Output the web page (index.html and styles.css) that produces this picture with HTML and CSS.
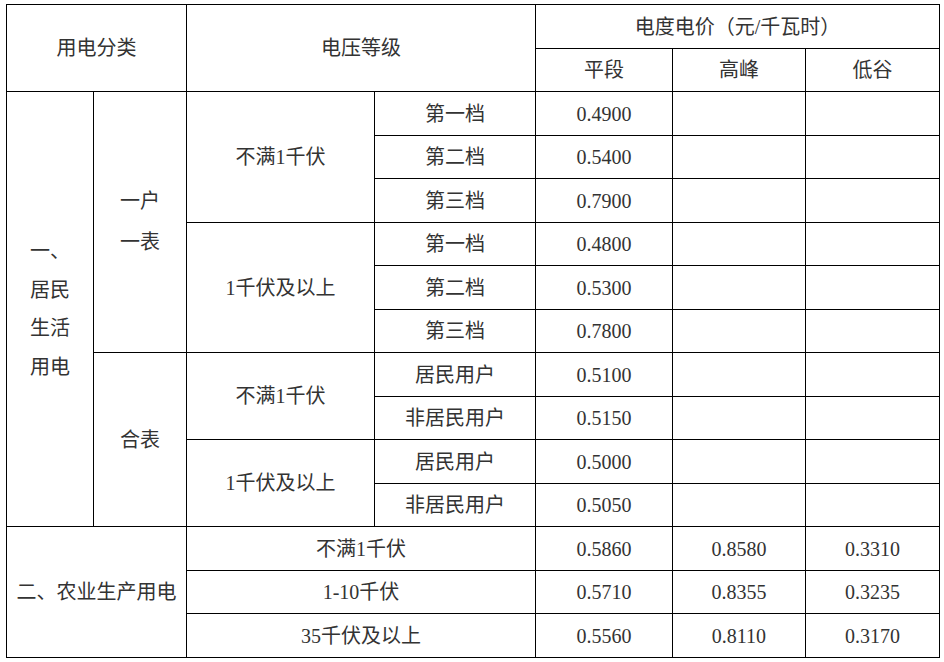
FILE: index.html
```html
<!DOCTYPE html>
<html lang="zh-CN">
<head>
<meta charset="utf-8">
<title>电价表</title>
<link rel="stylesheet" href="styles.css">
</head>
<body>
<table class="price-table">
  <colgroup>
    <col class="c1"><col class="c2"><col class="c3"><col class="c4"><col class="c5"><col class="c6"><col class="c7">
  </colgroup>
  <tr class="ra">
    <td colspan="2" rowspan="2">用电分类</td>
    <td colspan="2" rowspan="2">电压等级</td>
    <td colspan="3">电度电价（元/千瓦时）</td>
  </tr>
  <tr class="rb">
    <td>平段</td><td>高峰</td><td>低谷</td>
  </tr>
  <tr class="ra">
    <td rowspan="10" class="stack">一、<br>居民<br>生活<br>用电</td>
    <td rowspan="6" class="stack2">一户<br>一表</td>
    <td rowspan="3">不满1千伏</td>
    <td>第一档</td><td>0.4900</td><td></td><td></td>
  </tr>
  <tr class="rb"><td>第二档</td><td>0.5400</td><td></td><td></td></tr>
  <tr class="ra"><td>第三档</td><td>0.7900</td><td></td><td></td></tr>
  <tr class="rb">
    <td rowspan="3">1千伏及以上</td>
    <td>第一档</td><td>0.4800</td><td></td><td></td>
  </tr>
  <tr class="ra"><td>第二档</td><td>0.5300</td><td></td><td></td></tr>
  <tr class="rb"><td>第三档</td><td>0.7800</td><td></td><td></td></tr>
  <tr class="ra">
    <td rowspan="4">合表</td>
    <td rowspan="2">不满1千伏</td>
    <td>居民用户</td><td>0.5100</td><td></td><td></td>
  </tr>
  <tr class="rb"><td>非居民用户</td><td>0.5150</td><td></td><td></td></tr>
  <tr class="ra">
    <td rowspan="2">1千伏及以上</td>
    <td>居民用户</td><td>0.5000</td><td></td><td></td>
  </tr>
  <tr class="rb"><td>非居民用户</td><td>0.5050</td><td></td><td></td></tr>
  <tr class="ra">
    <td colspan="2" rowspan="3">二、农业生产用电</td>
    <td colspan="2">不满1千伏</td><td>0.5860</td><td>0.8580</td><td>0.3310</td>
  </tr>
  <tr class="rb"><td colspan="2">1-10千伏</td><td>0.5710</td><td>0.8355</td><td>0.3235</td></tr>
  <tr class="ra"><td colspan="2">35千伏及以上</td><td>0.5560</td><td>0.8110</td><td>0.3170</td></tr>
</table>
</body>
</html>
```
FILE: styles.css
```css
html, body {
  margin: 0;
  padding: 0;
  background: #ffffff;
}
body {
  padding: 4px 0 0 6px;
  font-family: "Liberation Serif", "Noto Sans CJK SC", serif;
  font-size: 20px;
  color: #333333;
}
.price-table {
  border-collapse: collapse;
  table-layout: fixed;
  width: 933px;
}
.c1 { width: 87px; }
.c2 { width: 93px; }
.c3 { width: 188px; }
.c4 { width: 161px; }
.c5 { width: 137px; }
.c6 { width: 133px; }
.c7 { width: 134px; }
.price-table td {
  border: 1px solid #000000;
  text-align: center;
  vertical-align: middle;
  padding: 0;
  line-height: 24px;
}
.ra { height: 44px; }
.rb { height: 43px; }
.price-table td.stack { line-height: 38.5px; }
.price-table td.stack2 { line-height: 41px; }
```
